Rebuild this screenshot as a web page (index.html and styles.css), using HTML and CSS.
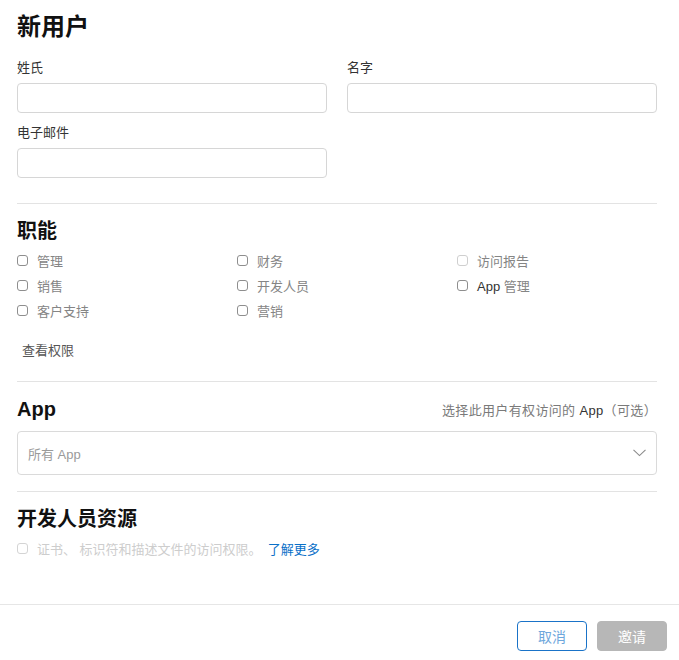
FILE: index.html
```html
<!DOCTYPE html>
<html lang="zh-CN">
<head>
<meta charset="utf-8">
<title>新用户</title>
<link rel="stylesheet" href="styles.css">
</head>
<body>
<div class="page">
  <h1 class="title">新用户</h1>
  <div class="fields">
    <div class="field">
      <label class="label">姓氏</label>
      <input class="input" type="text">
    </div>
    <div class="field">
      <label class="label">名字</label>
      <input class="input" type="text">
    </div>
    <div class="field">
      <label class="label">电子邮件</label>
      <input class="input" type="text">
    </div>
  </div>

  <hr class="divider">

  <h2 class="section-title">职能</h2>
  <div class="roles">
    <label class="check"><input type="checkbox"><span>管理</span></label>
    <label class="check"><input type="checkbox"><span>财务</span></label>
    <label class="check disabled"><input type="checkbox" disabled><span>访问报告</span></label>
    <label class="check"><input type="checkbox"><span>销售</span></label>
    <label class="check"><input type="checkbox"><span>开发人员</span></label>
    <label class="check"><input type="checkbox"><span><span class="dark">App</span> 管理</span></label>
    <label class="check"><input type="checkbox"><span>客户支持</span></label>
    <label class="check"><input type="checkbox"><span>营销</span></label>
  </div>
  <a class="perm-link">查看权限</a>

  <hr class="divider">

  <div class="section-head">
    <h2 class="section-title">App</h2>
    <span class="hint">选择此用户有权访问的 <span class="dark">App</span>（可选）</span>
  </div>
  <div class="select">
    <span class="placeholder">所有 App</span>
    <svg class="chevron" width="13" height="8" viewBox="0 0 13 8"><polyline points="0.5,0.8 6.5,6.6 12.5,0.8" fill="none" stroke="#8a8a8a" stroke-width="1.1"/></svg>
  </div>

  <hr class="divider">

  <h2 class="section-title">开发人员资源</h2>
  <div class="dev-row">
    <label class="check faded"><input type="checkbox" disabled><span>证书、 标识符和描述文件的访问权限。</span></label>
    <a class="learn">了解更多</a>
  </div>
</div>
<div class="footer">
  <button class="btn btn-cancel">取消</button>
  <button class="btn btn-invite">邀请</button>
</div>
</body>
</html>
```
FILE: styles.css
```css
html, body {
  margin: 0;
  padding: 0;
  background: #fff;
}
body {
  font-family: "Liberation Sans", "Noto Sans CJK SC", sans-serif;
  color: #111;
  min-height: 100vh;
  display: flex;
  flex-direction: column;
}
.page {
  padding: 12px 22px 0 17px;
}
.title {
  font-size: 24px;
  line-height: 30px;
  font-weight: 700;
  margin: 0;
  color: #111;
}
.fields {
  display: grid;
  grid-template-columns: 1fr 1fr;
  column-gap: 20px;
  row-gap: 12px;
  margin-top: 18px;
}
.label {
  display: block;
  font-size: 13px;
  line-height: 16px;
  color: #333;
  margin-bottom: 7px;
}
.input {
  display: block;
  box-sizing: border-box;
  width: 100%;
  height: 30px;
  border: 1px solid #d6d6d6;
  border-radius: 4px;
  margin: 0;
  background: #fff;
}
.divider {
  border: 0;
  border-top: 1px solid #e3e3e3;
  margin: 25px 0 0;
}
.section-title {
  font-size: 20px;
  line-height: 26px;
  font-weight: 700;
  margin: 14px 0 0;
  color: #111;
}
.roles {
  display: grid;
  grid-template-columns: 220px 220px 1fr;
  margin-top: 4px;
}
.check {
  display: flex;
  align-items: center;
  height: 25px;
  font-size: 13px;
  color: #858585;
}
.check input {
  appearance: none;
  -webkit-appearance: none;
  box-sizing: border-box;
  width: 11px;
  height: 11px;
  margin: 0 9px 0 0;
  border: 1px solid #8e8e8e;
  border-radius: 3px;
  background: #fff;
  flex: none;
}
.check.disabled input {
  border-color: #cfcfcf;
}
.dark {
  color: #333;
}
.perm-link {
  display: block;
  margin: 19px 0 0 5px;
  font-size: 13px;
  line-height: 18px;
  color: #555;
}
.page > .divider:nth-of-type(2) {
  margin-top: 21px;
}
.section-head {
  display: flex;
  justify-content: space-between;
  align-items: center;
}
.hint {
  font-size: 13px;
  letter-spacing: 0.35px;
  color: #7a7a7a;
  margin-top: 14px;
}
.select {
  box-sizing: border-box;
  height: 44px;
  margin-top: 9px;
  border: 1px solid #dadada;
  border-radius: 4px;
  display: flex;
  align-items: center;
  justify-content: space-between;
  padding: 0 10px 0 10px;
}
.placeholder {
  font-size: 13px;
  color: #9a9a9a;
}
.chevron {
  display: block;
}
.select + .divider {
  margin-top: 16px;
}
.dev-row {
  display: flex;
  align-items: center;
  margin-top: 4px;
}
.check.faded {
  color: #cdcdcd;
}
.check.faded input {
  border-color: #d4d4d4;
}
.learn {
  font-size: 13px;
  color: #0a70c8;
  margin-left: 6px;
}
.footer {
  margin-top: auto;
  border-top: 1px solid #e6e6e6;
  display: flex;
  justify-content: flex-end;
  gap: 10px;
  padding: 16px 12px 9px;
}
.btn {
  box-sizing: border-box;
  width: 70px;
  height: 30px;
  border-radius: 4px;
  font-family: "Liberation Sans", "Noto Sans CJK SC", sans-serif;
  font-size: 14px;
  padding: 0;
  margin: 0;
}
.btn-cancel {
  background: #fff;
  border: 1px solid #1a73c8;
  color: #6ea7dc;
}
.btn-invite {
  background: #b7b7b7;
  border: 1px solid #b7b7b7;
  color: #fff;
}
```
